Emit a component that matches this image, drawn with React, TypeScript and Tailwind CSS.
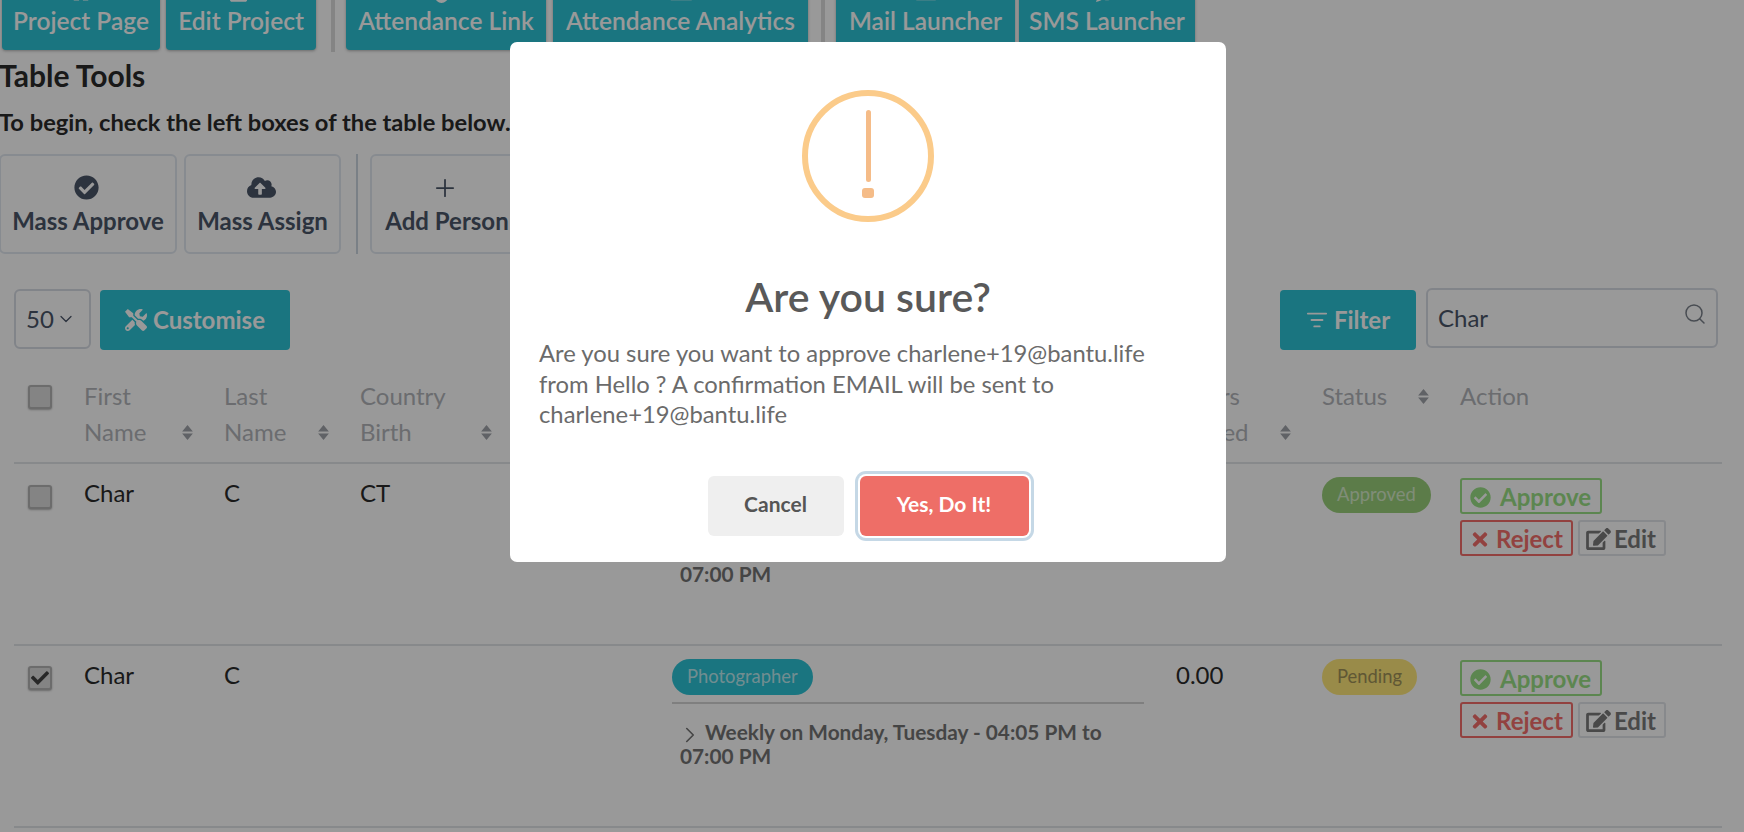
import React from "react";
import { FaCheckCircle, FaCloudUploadAlt, FaTools, FaTimes, FaEdit, FaCheck, FaRegEdit, FaLink, FaChartBar, FaEnvelope, FaSms, FaHome } from "react-icons/fa";
import { Plus, ChevronDown, ChevronRight, Search, ListFilter } from "lucide-react";

function TopBtn({ label, w, icon }: { label: string; w: string; icon: React.ReactNode }) {
  return (
    <button className={`${w} h-[80px] flex flex-col items-center justify-end pb-[11px] shrink-0 rounded-[4px] bg-[#2cc3d5] text-white text-[24.5px] leading-[36px] font-semibold shadow-[0_1px_3px_rgba(0,0,0,0.3)]`}>
      <span className="text-[22px] leading-none">{icon}</span>
      {label}
    </button>
  );
}

function Sort() {
  return (
    <svg viewBox="0 0 10 14" className="w-[11px] h-[15px] shrink-0" fill="#a0a3aa">
      <path d="M5 0 L10 6 H0 Z M5 14 L0 8 H10 Z" />
    </svg>
  );
}

function Box({ checked }: { checked?: boolean }) {
  return (
    <span className="flex items-center justify-center w-[24px] h-[24px] rounded-[3px] border-2 border-[#b4b4b4] bg-[#dcdcdc] shadow-[0_1px_2px_rgba(0,0,0,0.3)] text-[#444]">
      {checked ? <FaCheck className="w-[18px] h-[18px]" /> : null}
    </span>
  );
}

function Th({ top, bottom, sort = true, w }: { top?: string; bottom?: string; sort?: boolean; w: string }) {
  return (
    <th className={`${w} p-0 pl-[14px] pr-[17px] align-top text-left font-normal text-[24px] leading-[36px] text-[#b2b5ba] pt-[6px] h-[91px]`}>
      <div className="flex justify-between items-end">
        <div>
          {top}
          {bottom ? <br /> : null}
          {bottom}
        </div>
        {sort ? (
          <div className="pb-[10px]">
            <Sort />
          </div>
        ) : null}
      </div>
    </th>
  );
}

function Actions() {
  return (
    <div className="flex flex-col gap-[6px] pt-[2px] items-start">
      <button className="flex items-center h-[36px] w-[142px] pl-[8px] pt-[2px] rounded-[3px] border-2 border-[#9ae085] text-[#9ae085] text-[24px] font-bold">
        <FaCheckCircle className="w-[21px] h-[21px] mr-[9px]" />
        Approve
      </button>
      <div className="flex gap-[5px]">
        <button className="flex items-center h-[36px] w-[113px] pl-[9px] pt-[2px] rounded-[3px] border-2 border-[#f46f6b] text-[#f46f6b] text-[24px] font-bold">
          <FaTimes className="w-[18px] h-[21px] mr-[7px]" />
          Reject
        </button>
        <button className="flex items-center h-[36px] w-[88px] pl-[6px] pt-[2px] rounded-[3px] border-2 border-[#e2e4ea] text-[#7a7a7a] text-[24px] font-bold">
          <FaEdit className="w-[25px] h-[22px] mr-[3px]" />
          Edit
        </button>
      </div>
    </div>
  );
}

function Badge({ label, cls }: { label: string; cls: string }) {
  return <span className={`inline-block h-[36px] leading-[34px] rounded-full text-[18.4px] ${cls}`}>{label}</span>;
}

function ShiftText() {
  return (
    <div className="text-[20.8px] leading-[24px] font-bold text-[#747474] pl-[8px] pt-[16px] w-[440px]">
      <ChevronRight className="inline-block w-[26px] h-[26px] -ml-[3px] mr-[2px] -my-[4px]" strokeWidth={1.5} />
      Weekly on Monday, Tuesday - 04:05 PM to 07:00 PM
    </div>
  );
}

function Role() {
  return (
    <td className="p-0 pl-[14px] pt-[10px]">
      <Badge label="Photographer" cls="px-[15px] bg-[#2cc3d5] text-white/70" />
      <div className="h-[2px] w-[472px] bg-[#d4d4d4] mt-[7px]" />
      <ShiftText />
    </td>
  );
}

export default function App() {
  return (
    <div className="relative h-[832px] overflow-hidden bg-white font-['Lato',sans-serif] text-[#2b2b2b]">
      <div className="-mt-[30px] flex items-start pl-[2px]">
        <TopBtn label="Project Page" w="w-[158px]" icon={<FaHome />} />
        <TopBtn label="Edit Project" w="w-[150px] ml-[6px]" icon={<FaRegEdit />} />
        <div className="w-[4px] h-[82px] bg-[#dcdcdc] ml-[15px] shrink-0" />
        <TopBtn label="Attendance Link" w="w-[200px] ml-[11px]" icon={<FaLink />} />
        <TopBtn label="Attendance Analytics" w="w-[255px] ml-[7px]" icon={<FaChartBar />} />
        <div className="w-[4px] h-[82px] bg-[#dcdcdc] ml-[13px] shrink-0" />
        <TopBtn label="Mail Launcher" w="w-[179px] ml-[11px]" icon={<FaEnvelope />} />
        <TopBtn label="SMS Launcher" w="w-[176px] ml-[4px]" icon={<FaSms />} />
      </div>

      <h2 className="text-[30px] leading-[36px] font-bold mt-[5px] -ml-[1px]">Table Tools</h2>
      <p className="text-[23.7px] leading-[30px] font-bold mt-[14px] -ml-[1px]">To begin, check the left boxes of the table below.</p>

      <div className="flex items-stretch h-[100px] mt-[17px] -ml-[1px] text-[#4a5568] text-[24px] font-bold">
        <div className="w-[178px] pt-[5px] rounded-[6px] border-2 border-[#e2e8f0] flex flex-col items-center justify-center">
          <FaCheckCircle className="w-[25px] h-[25px] mb-[3px] mr-[4px]" />
          Mass Approve
        </div>
        <div className="w-[157px] pt-[5px] ml-[7px] rounded-[6px] border-2 border-[#e2e8f0] flex flex-col items-center justify-center">
          <FaCloudUploadAlt className="w-[29px] h-[25px] mb-[3px] mr-[2px]" />
          Mass Assign
        </div>
        <div className="w-[2px] bg-[#cbd5e0] ml-[15px]" />
        <div className="w-[154px] pt-[5px] ml-[12px] rounded-[6px] border-2 border-[#e2e8f0] flex flex-col items-center justify-center">
          <Plus className="w-[28px] h-[28px] mb-[1px] mr-[4px]" strokeWidth={1.5} />
          Add Person
        </div>
      </div>

      <div className="flex items-start mt-[36px] pl-[14px] pr-[26px]">
        <div className="w-[77px] h-[60px] rounded-[6px] border-2 border-[#d8dce4] flex items-center pl-[10px] text-[24px] text-[#4a5568] -mt-[1px]">
          50
          <ChevronDown className="w-[20px] h-[20px] ml-[2px]" strokeWidth={1.5} />
        </div>
        <button className="w-[190px] h-[60px] ml-[9px] rounded-[4px] bg-[#2cc3d5] text-white text-[24px] font-bold flex items-center justify-center">
          <FaTools className="w-[22px] h-[22px] mr-[6px]" />
          Customise
        </button>
        <div className="flex-1" />
        <button className="w-[136px] h-[60px] rounded-[4px] bg-[#2cc3d5] text-white text-[24px] font-bold flex items-center justify-center">
          <ListFilter className="w-[22px] h-[22px] mr-[6px]" />
          Filter
        </button>
        <div className="w-[292px] h-[60px] ml-[10px] -mt-[2px] rounded-[6px] border-2 border-[#d8dce4] flex items-center justify-between pl-[10px] pr-[9px] text-[24px] text-[#4a5568]">
          Char
          <Search className="w-[24px] h-[24px] -mt-[8px] text-[#7a808a]" strokeWidth={1.5} />
        </div>
      </div>

      <div className="pl-[14px] mt-[22px]">
        <table className="table-fixed w-[1708px] border-collapse">
          <thead>
            <tr className="border-b-2 border-[#e2e4e8]">
              <th className="w-[56px] p-0 pl-[14px] align-top pt-[13px]">
                <Box />
              </th>
              <Th w="w-[140px]" top="First" bottom="Name" />
              <Th w="w-[136px]" top="Last" bottom="Name" />
              <Th w="w-[163px]" top="Country" bottom="Birth" />
              <th className="w-[149px]" />
              <th className="w-[504px]" />
              <Th w="w-[146px]" top="Hours" bottom="Served" />
              <Th w="w-[138px]" top="Status" />
              <Th w="w-[276px]" top="Action" sort={false} />
            </tr>
          </thead>
          <tbody className="text-[24px] leading-[36px]">
            <tr className="border-b-2 border-[#e2e4e8] h-[182px] align-top">
              <td className="p-0 pl-[14px] pt-[21px]"><Box /></td>
              <td className="p-0 pl-[14px] pt-[11px]">Char</td>
              <td className="p-0 pl-[14px] pt-[11px]">C</td>
              <td className="p-0 pl-[14px] pt-[11px]">CT</td>
              <td />
              <Role />
              <td className="p-0 pl-[14px] pt-[11px]">0.00</td>
              <td className="p-0 pl-[14px] pt-[10px]">
                <Badge label="Approved" cls="px-[15px] bg-[#9acf7b] text-white/60" />
              </td>
              <td className="p-0 pl-[14px] pt-[12px]"><Actions /></td>
            </tr>
            <tr className="border-b-2 border-[#e2e4e8] h-[182px] align-top">
              <td className="p-0 pl-[14px] pt-[20px]"><Box checked /></td>
              <td className="p-0 pl-[14px] pt-[11px]">Char</td>
              <td className="p-0 pl-[14px] pt-[11px]">C</td>
              <td />
              <td />
              <Role />
              <td className="p-0 pl-[14px] pt-[11px]">0.00</td>
              <td className="p-0 pl-[14px] pt-[10px]">
                <Badge label="Pending" cls="px-[15px] bg-[#ffe87b] text-[#a09258]" />
              </td>
              <td className="p-0 pl-[14px] pt-[12px]"><Actions /></td>
            </tr>
          </tbody>
        </table>
      </div>

      <div className="absolute inset-0 bg-black/40 flex justify-center items-start pt-[42px] pr-[8px]">
        <div className="w-[716px] h-[520px] bg-white rounded-[7px] flex flex-col items-center">
          <div className="mt-[48px] w-[132px] h-[132px] rounded-full border-[6px] border-[#fbcb8a] flex flex-col items-center shrink-0">
            <div className="w-[5px] h-[72px] rounded-full bg-[#f5bc88] mt-[14px]" />
            <div className="w-[12px] h-[10px] rounded-[3px] bg-[#f5bc88] mt-[6px]" />
          </div>
          <h2 className="mt-[49px] text-[41px] leading-[52px] font-semibold text-[#595959]">Are you sure?</h2>
          <p className="self-start pl-[29px] w-[650px] mt-[15px] text-[23.8px] leading-[30.5px] text-[#6b6b6b]">
            Are you sure you want to approve charlene+19@bantu.life from Hello ? A confirmation EMAIL will be sent to charlene+19@bantu.life
          </p>
          <div className="flex gap-[16px] mt-[46px]">
            <button className="w-[136px] h-[60px] pb-[3px] rounded-[6px] bg-[#efefef] text-[#555] text-[21px] font-bold">Cancel</button>
            <button className="w-[169px] h-[60px] pb-[3px] rounded-[6px] bg-[#ee6e67] text-white text-[21px] font-bold ring-2 ring-white shadow-[0_0_0_5px_#c5d8e6]">Yes, Do It!</button>
          </div>
        </div>
      </div>
    </div>
  );
}
